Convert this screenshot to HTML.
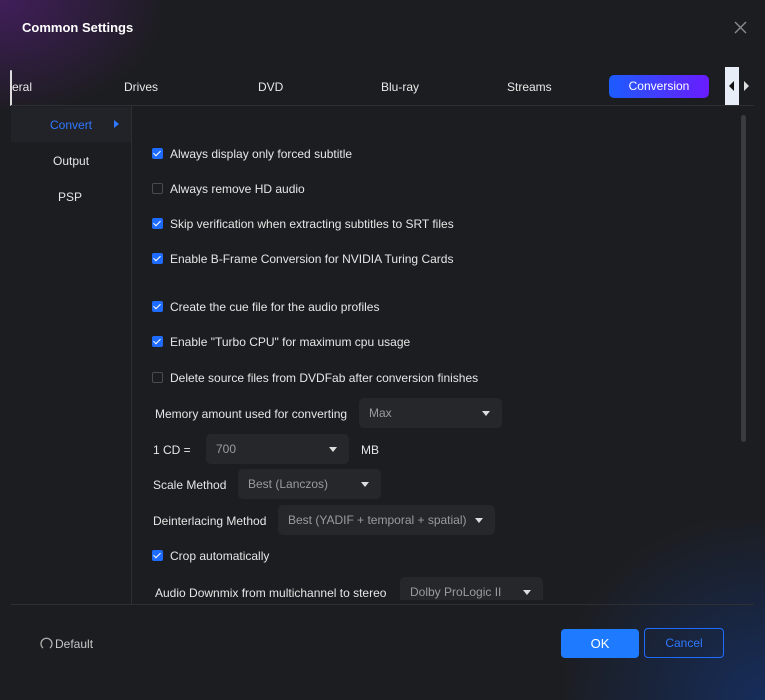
<!DOCTYPE html>
<html style="width:765px;height:700px;overflow:hidden"><head><meta charset="utf-8"><style>
*{margin:0;padding:0;box-sizing:border-box}
body{width:765px;height:700px;overflow:hidden;background:#1c1d20;font-family:"Liberation Sans",sans-serif;color:#e6e6e6;font-size:12px;position:relative}
.glow1{position:absolute;left:0;top:0;width:160px;height:110px;background:radial-gradient(ellipse at 0% 0%,rgba(90,30,130,0.6),rgba(28,29,32,0) 75%)}
.glow2{position:absolute;right:0;bottom:0;width:200px;height:180px;background:radial-gradient(ellipse at 100% 100%,rgba(20,50,110,0.75),rgba(28,29,32,0) 75%)}
.a{position:absolute;white-space:nowrap}
.tab{position:absolute;top:80px;font-size:12px;color:#e8e8e8}
.cb{position:absolute;left:152px;width:11px;height:11px;border-radius:2px}
.on{background:#1e6cff}
.on::after{content:"";position:absolute;left:3px;top:1px;width:3px;height:6px;border:solid #fff;border-width:0 1.5px 1.5px 0;transform:rotate(45deg)}
.off{border:1px solid #4a4b50}
.lbl{position:absolute;left:170px;font-size:12px;color:#e6e6e6}
.sel{position:absolute;height:30px;background:#26272b;border-radius:5px;color:#9a9ba0;font-size:12px;padding:8px 10px}
.sel::after{content:"";position:absolute;right:12px;top:13px;border:4px solid transparent;border-top:5px solid #ddd;border-bottom:0}
</style></head><body>
<div class="glow1"></div><div class="glow2"></div>
<div class="a" style="left:22px;top:20px;font-weight:bold;font-size:13px;color:#fff">Common Settings</div>
<svg class="a" style="left:734px;top:21px" width="13" height="13"><path d="M1 1L12 12M12 1L1 12" stroke="#8a8b90" stroke-width="1.4"/></svg>
<div class="a" style="left:10px;top:70px;width:2px;height:36px;background:#ddd;border-radius:1px"></div>
<div class="tab" style="left:12px">eral</div>
<div class="tab" style="left:124px">Drives</div>
<div class="tab" style="left:258px">DVD</div>
<div class="tab" style="left:381px">Blu-ray</div>
<div class="tab" style="left:507px">Streams</div>
<div class="a" style="left:609px;top:75px;width:100px;height:23px;border-radius:5px;background:linear-gradient(90deg,#1c5cff,#6a1cff);color:#fff;text-align:center;line-height:23px">Conversion</div>
<div class="a" style="left:725px;top:67px;width:14px;height:38px;background:#e8eef8"></div>
<svg class="a" style="left:728px;top:81px" width="30" height="10"><path d="M6 0L1 5L6 10Z" fill="#111"/><path d="M16 0L21 5L16 10Z" fill="#ddd"/></svg>
<div class="a" style="left:11px;top:105px;width:743px;height:1px;background:#2e2f33"></div>
<div class="a" style="left:11px;top:107px;width:120px;height:35px;background:#222328"></div>
<div class="a" style="left:131px;top:106px;width:1px;height:498px;background:#2e2f33"></div>
<div class="a" style="left:50px;top:118px;color:#2f78ff">Convert</div>
<svg class="a" style="left:114px;top:120px" width="6" height="8"><path d="M0 0L5 4L0 8Z" fill="#2f78ff"/></svg>
<div class="a" style="left:53px;top:154px">Output</div>
<div class="a" style="left:58px;top:190px">PSP</div>
<div class="a" style="left:741px;top:115px;width:5px;height:327px;background:#3a3b40;border-radius:3px"></div>
<div style="position:absolute;left:132px;top:106px;width:600px;height:494px;overflow:hidden">
<div style="position:relative;left:-132px;top:-106px">
<div class="cb on" style="top:148px"></div><div class="lbl" style="top:147px">Always display only forced subtitle</div>
<div class="cb off" style="top:183px"></div><div class="lbl" style="top:182px">Always remove HD audio</div>
<div class="cb on" style="top:218px"></div><div class="lbl" style="top:217px">Skip verification when extracting subtitles to SRT files</div>
<div class="cb on" style="top:253px"></div><div class="lbl" style="top:252px">Enable B-Frame Conversion for NVIDIA Turing Cards</div>
<div class="cb on" style="top:301px"></div><div class="lbl" style="top:300px">Create the cue file for the audio profiles</div>
<div class="cb on" style="top:336px"></div><div class="lbl" style="top:335px">Enable "Turbo CPU" for maximum cpu usage</div>
<div class="cb off" style="top:372px"></div><div class="lbl" style="top:371px">Delete source files from DVDFab after conversion finishes</div>
<div class="a" style="left:155px;top:407px">Memory amount used for converting</div>
<div class="sel" style="left:359px;top:398px;width:143px">Max</div>
<div class="a" style="left:153px;top:443px">1 CD =</div>
<div class="sel" style="left:206px;top:434px;width:143px">700</div>
<div class="a" style="left:361px;top:443px">MB</div>
<div class="a" style="left:153px;top:478px">Scale Method</div>
<div class="sel" style="left:238px;top:469px;width:143px">Best (Lanczos)</div>
<div class="a" style="left:153px;top:514px">Deinterlacing Method</div>
<div class="sel" style="left:278px;top:505px;width:217px">Best (YADIF + temporal + spatial)</div>
<div class="cb on" style="top:550px"></div><div class="lbl" style="top:549px">Crop automatically</div>
<div class="a" style="left:155px;top:586px">Audio Downmix from multichannel to stereo</div>
<div class="sel" style="left:400px;top:577px;width:143px">Dolby ProLogic II</div>
</div></div>
<div class="a" style="left:11px;top:604px;width:743px;height:1px;background:#2e2f33"></div>
<svg class="a" style="left:40px;top:637px" width="13" height="13"><path d="M3 11A5.5 5.5 0 1 1 10 11" fill="none" stroke="#aaa" stroke-width="1.3"/></svg>
<div class="a" style="left:55px;top:637px;color:#c8c8c8">Default</div>
<div class="a" style="left:561px;top:629px;width:78px;height:29px;background:#1e7bff;border-radius:4px;color:#fff;text-align:center;line-height:29px;font-size:13px">OK</div>
<div class="a" style="left:644px;top:628px;width:80px;height:30px;border:1.5px solid #1e6cff;border-radius:4px;color:#2f78ff;display:flex;align-items:center;justify-content:center;font-size:12px">Cancel</div>
</body></html>
